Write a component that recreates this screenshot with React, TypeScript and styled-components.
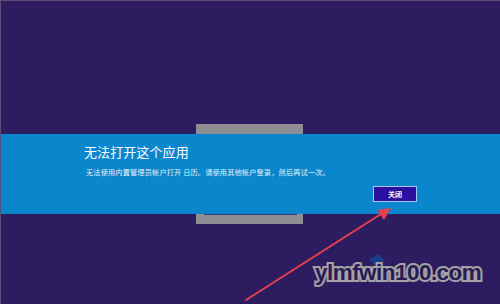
import React from "react";
import styled, { createGlobalStyle } from "styled-components";

const Global = createGlobalStyle`
  html, body { margin: 0; padding: 0; }
  body { background: #2d1c5f; font-family: "Noto Sans CJK SC", "Noto Sans", sans-serif; }
`;

const Screen = styled.div`
  position: relative;
  width: 500px;
  height: 304px;
  box-sizing: border-box;
  background: #2d1c5f;
  border-left: 1px solid #5b4d78;
  border-top: 1px solid #5b4d78;
  padding-top: 123px;
  display: flex;
  flex-direction: column;
  overflow: hidden;
`;

const GrayTab = styled.div<{ $bottom?: boolean }>`
  position: relative;
  margin-left: 195px;
  width: 107px;
  height: 10px;
  background: #8f8f93;
  ${(p) =>
    p.$bottom &&
    `
    &::before {
      content: "";
      position: absolute;
      left: 8px;
      right: 6px;
      top: 0;
      height: 1px;
      background: #3b3a78;
    }
  `}
`;

const Band = styled.div`
  height: 80px;
  background: #0a86cd;
  box-sizing: border-box;
  padding: 10px 0 0 83px;
  display: flex;
  flex-direction: column;
  width: 100%;
`;

const Inner = styled.div`
  width: 333px;
  display: flex;
  flex-direction: column;
`;

const Title = styled.div`
  color: #ffffff;
  font-size: 13px;
  line-height: 16px;
  letter-spacing: 0.1px;
`;

const Message = styled.div`
  margin-top: 7px;
  margin-left: 2px;
  color: #e8f2fa;
  font-size: 7.2px;
  line-height: 10px;
  letter-spacing: 0.15px;
  white-space: nowrap;
`;

const Actions = styled.div`
  margin-top: 9px;
  display: flex;
  justify-content: flex-end;
`;

const Button = styled.button`
  width: 44px;
  height: 16px;
  box-sizing: border-box;
  background: #2b0f9f;
  border: 1px solid #a9c8ef;
  color: #ffffff;
  font-family: "Noto Sans CJK SC", sans-serif;
  font-size: 7px;
  font-weight: 700;
  padding: 0;
  line-height: 14px;
`;

const Watermark = styled.div`
  position: absolute;
  left: 314px;
  top: 259px;
  font-family: "Liberation Sans", Arial, sans-serif;
  font-weight: 700;
  font-size: 22px;
  letter-spacing: -0.5px;
  color: #2a1a55;
  -webkit-text-stroke: 4px #a3a3a6;
  paint-order: stroke fill;
  transform: scaleX(1.02);
  transform-origin: left top;
`;

const Overlay = styled.svg`
  position: absolute;
  left: 0;
  top: 0;
  pointer-events: none;
`;

export default function App() {
  return (
    <>
      <Global />
      <Screen>
        <GrayTab />
        <Band>
          <Inner>
            <Title>无法打开这个应用</Title>
            <Message>无法使用内置管理员帐户打开 日历。请使用其他帐户登录，然后再试一次。</Message>
            <Actions>
              <Button>关闭</Button>
            </Actions>
          </Inner>
        </Band>
        <GrayTab $bottom />
        <Overlay width="500" height="304" viewBox="0 0 500 304">
          <path d="M368 258 L378 253 L384 260 L374 265 Z" fill="#1c3f8c" opacity="0.9" />
        </Overlay>
        <Watermark>ylmfwin100.com</Watermark>
        <Overlay width="500" height="304" viewBox="0 0 500 304">
          <line x1="245" y1="299" x2="380" y2="213" stroke="#e8404f" strokeWidth="2" strokeLinecap="round" />
          <path d="M390 207 L376 209 L383 219 Z" fill="#e8404f" />
        </Overlay>
      </Screen>
    </>
  );
}
